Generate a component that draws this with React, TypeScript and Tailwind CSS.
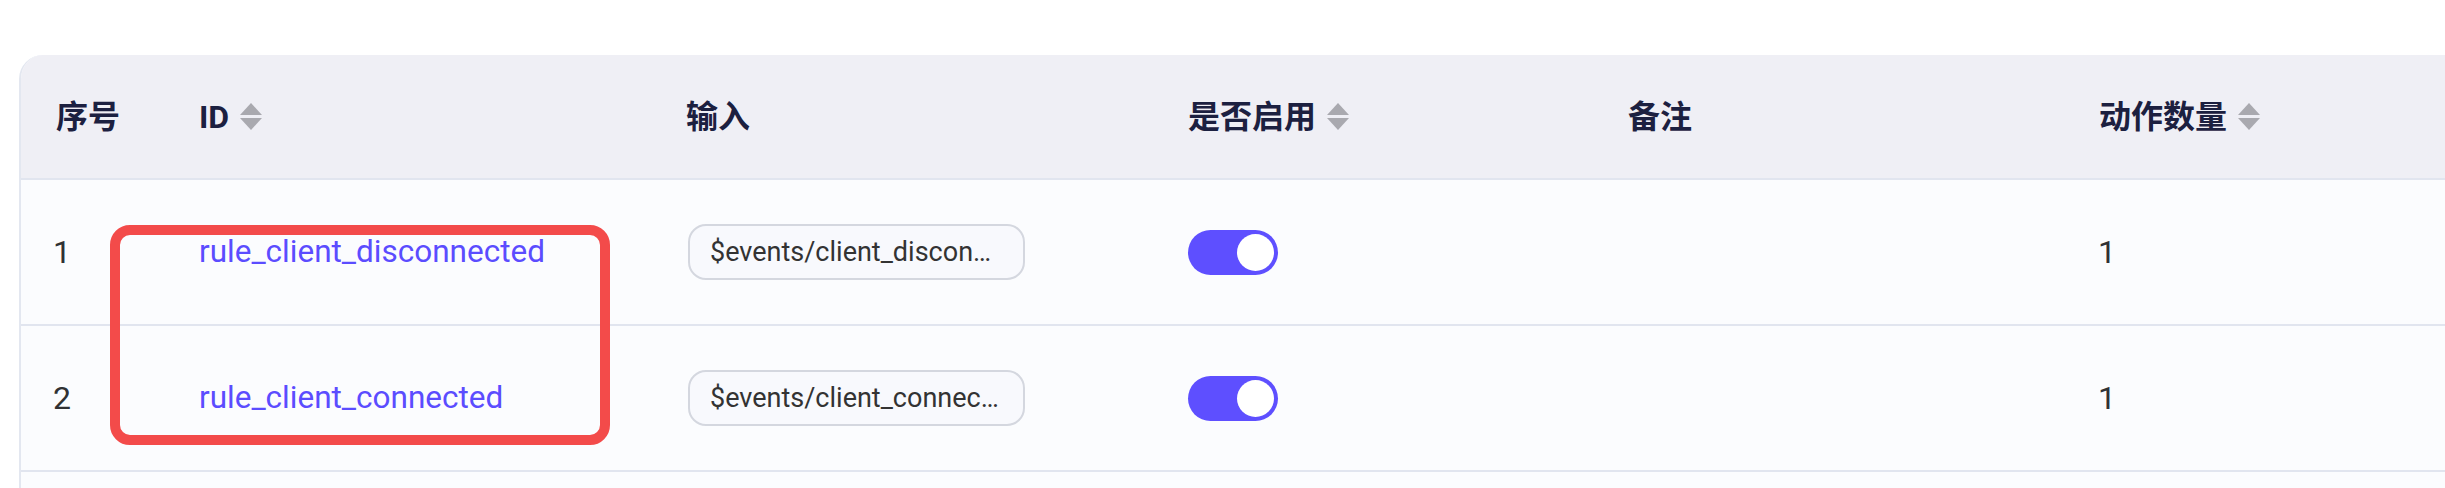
import React from "react";

function SortIcon() {
  return (
    <svg width="22" height="27" viewBox="0 0 22 27" className="ml-[11px] shrink-0">
      <path d="M0 12 L11 0 L22 12 Z" fill="#A9A9AF" />
      <path d="M0 15 L22 15 L11 27 Z" fill="#A9A9AF" />
    </svg>
  );
}

function Toggle() {
  return (
    <div className="w-[90px] h-[45px] rounded-full bg-[#5E4FFF] flex items-center justify-end pr-[4px]">
      <div className="w-[37px] h-[37px] rounded-full bg-white" />
    </div>
  );
}

const cols = "grid grid-cols-[145px_487px_502px_440px_471px_1fr]";

const rows = [
  { n: "1", id: "rule_client_disconnected", input: "$events/client_disconnected", count: "1" },
  { n: "2", id: "rule_client_connected", input: "$events/client_connected", count: "1" },
];

export default function App() {
  return (
    <div
      className="relative w-[2445px] h-[488px] bg-white overflow-hidden pl-[19px] pt-[55px]"
      style={{ fontFamily: 'Roboto, "Noto Sans CJK SC", sans-serif' }}
    >
      <div className="w-[2480px] rounded-tl-[24px] overflow-hidden bg-[#FBFCFE] border-l-2 border-[#E3E7F0]">
        <div className={`${cols} h-[125px] bg-[#EFEFF5] border-b-2 border-[#E1E5EF] items-center text-[32px] font-bold text-[#1C2040]`}>
          <div className="pl-[35px]">序号</div>
          <div className="pl-[33px] flex items-center">
            <span>ID</span>
            <SortIcon />
          </div>
          <div className="pl-[33px]">输入</div>
          <div className="pl-[33px] flex items-center">
            <span>是否启用</span>
            <SortIcon />
          </div>
          <div className="pl-[33px]">备注</div>
          <div className="pl-[33px] flex items-center">
            <span>动作数量</span>
            <SortIcon />
          </div>
        </div>
        {rows.map((r) => (
          <div key={r.n} className={`${cols} h-[146px] border-b-2 border-[#E1E5EF] items-center text-[32px] text-[#303133]`}>
            <div className="pl-[32px]">{r.n}</div>
            <div className="pl-[33px] text-[31.5px] text-[#5B4CFF]">{r.id}</div>
            <div className="pl-[35px]">
              <div className="w-[337px] h-[56px] rounded-[18px] border-2 border-[#D4D7DF] bg-[#F8F9FD] pl-[20px] pr-[18px] flex items-center text-[27px] text-[#333]">
                <span className="truncate">{r.input}</span>
              </div>
            </div>
            <div className="pl-[33px]">
              <Toggle />
            </div>
            <div className="pl-[33px]"></div>
            <div className="pl-[32px]">{r.count}</div>
          </div>
        ))}
        <div className="h-[60px]" />
      </div>
      <div className="absolute left-[110px] top-[225px] w-[500px] h-[220px] border-[10px] border-[#F34B4A] rounded-[20px]" />
    </div>
  );
}
